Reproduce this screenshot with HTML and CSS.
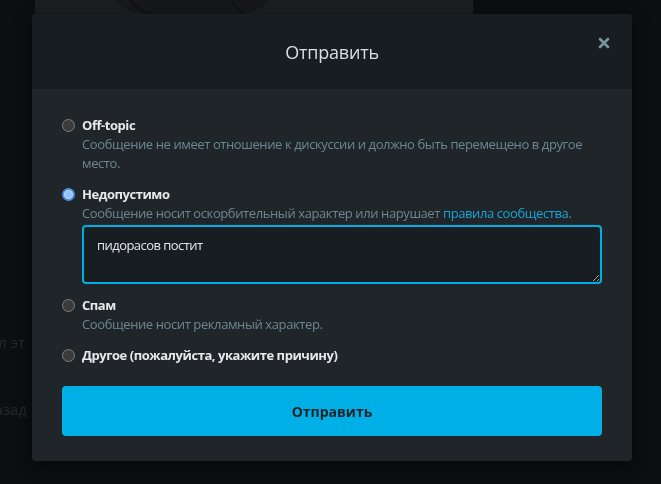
FILE: index.html
```html
<!DOCTYPE html>
<html lang="ru">
<head>
<meta charset="utf-8">
<title>Отправить</title>
<link rel="stylesheet" href="styles.css">
</head>
<body>
<div class="page">
  <div class="hero">
    <svg class="hero-art" width="438" height="14" viewBox="0 0 438 14">
      <path d="M80 0 C90 10 100 14 110 14 L210 14 C220 12 230 6 236 0 Z" fill="#161819"/>
      <path d="M95 0 C100 6 108 12 116 14" stroke="#101213" stroke-width="2" fill="none"/>
      <path d="M196 0 C200 6 206 12 210 14" stroke="#101213" stroke-width="2" fill="none"/>
    </svg>
  </div>
  <div class="bg-text">
    <p class="bg-line one"><span>Прочитал правил эт</span></p>
    <p class="bg-line two"><span>Вернуться назад</span></p>
  </div>
</div>

<div class="overlay">
  <div class="modal">
    <div class="modal-header">
      <h2 class="modal-title">Отправить</h2>
      <button class="close" type="button" aria-label="Закрыть">
        <svg width="12" height="12" viewBox="0 0 12 12"><path d="M2 2 L10 10 M10 2 L2 10" stroke="#7a949d" stroke-width="2.6" stroke-linecap="round"/></svg>
      </button>
    </div>
    <div class="modal-body">
      <div class="options">
        <div class="option">
          <span class="radio"></span>
          <div class="opt-text">
            <div class="opt-label">Off-topic</div>
            <div class="opt-desc">Сообщение не имеет отношение к дискуссии и должно быть перемещено в другое место.</div>
          </div>
        </div>
        <div class="option">
          <span class="radio checked"></span>
          <div class="opt-text">
            <div class="opt-label">Недопустимо</div>
            <div class="opt-desc">Сообщение носит оскорбительный характер или нарушает <a class="link" href="#">правила сообщества</a>.</div>
            <textarea class="reason">пидорасов постит</textarea>
          </div>
        </div>
        <div class="option">
          <span class="radio"></span>
          <div class="opt-text">
            <div class="opt-label">Спам</div>
            <div class="opt-desc">Сообщение носит рекламный характер.</div>
          </div>
        </div>
        <div class="option">
          <span class="radio"></span>
          <div class="opt-text">
            <div class="opt-label">Другое (пожалуйста, укажите причину)</div>
          </div>
        </div>
      </div>
      <button class="submit" type="button">Отправить</button>
    </div>
  </div>
</div>
</body>
</html>
```

FILE: styles.css
```css
* { box-sizing: border-box; }

html, body {
  margin: 0;
  height: 100%;
}

body {
  background: #0b0f10;
  font-family: "Open Sans", "Noto Sans", sans-serif;
  overflow: hidden;
}

.page {
  width: 661px;
  height: 484px;
}

.hero {
  margin-left: 35px;
  width: 438px;
  height: 14px;
  background: #1c1f21;
}

.hero-art {
  display: block;
}

.bg-text {
  padding-top: 318px;
}

.bg-line {
  margin: 0;
  width: 25px;
  display: flex;
  justify-content: flex-end;
  color: #23292b;
  font-size: 15px;
  line-height: 20px;
  white-space: nowrap;
}

.bg-line span {
  flex: none;
}

.bg-line.two {
  margin-top: 47px;
  width: 27px;
}

.overlay {
  position: fixed;
  inset: 0;
  padding: 14px 0 0 32px;
}

.modal {
  position: relative;
  width: 600px;
  border-radius: 4px;
  overflow: hidden;
  background: #1f2528;
  box-shadow: 0 4px 16px rgba(0, 0, 0, 0.5);
}

.modal-header {
  height: 75px;
  background: #171d20;
  display: flex;
  align-items: center;
  justify-content: center;
}

.modal-title {
  margin: 0;
  font-size: 18px;
  font-weight: 400;
  color: #dadfe0;
  letter-spacing: -0.2px;
}

.close {
  position: absolute;
  top: 21px;
  right: 20px;
  width: 16px;
  height: 16px;
  padding: 2px;
  border: 0;
  background: none;
  display: flex;
}

.modal-body {
  padding: 27px 30px 25px 30px;
}

.options {
  display: flex;
  flex-direction: column;
  gap: 12px;
}

.option {
  display: flex;
  align-items: flex-start;
}

.radio {
  flex: none;
  width: 13px;
  height: 13px;
  margin-top: 3px;
  margin-right: 7px;
  border-radius: 50%;
  background: #3b3b3b;
  border: 1px solid #7e7e7e;
}

.radio.checked {
  background: #93c3ff;
  border: 2px solid #4f8fe3;
  box-shadow: inset 0 0 0 1px #c7dfff;
}

.opt-text {
  flex: 1;
  min-width: 0;
}

.opt-label {
  font-size: 13px;
  font-weight: 700;
  line-height: 19px;
  color: #e6e8e9;
  letter-spacing: -0.45px;
}

.opt-desc {
  font-size: 13px;
  line-height: 19px;
  color: #6d8791;
  letter-spacing: -0.4px;
}

.link {
  color: #16a5d8;
  text-decoration: none;
}

.reason {
  display: block;
  width: 100%;
  height: 59px;
  margin-top: 2px;
  padding: 9px 13px;
  border: 2px solid #00aee6;
  border-radius: 4px;
  background: #171d20;
  color: #e3e6e7;
  font-family: inherit;
  font-size: 13px;
  line-height: 19px;
  letter-spacing: -0.55px;
  outline: none;
}

.submit {
  display: block;
  width: 100%;
  height: 50px;
  margin-top: 21px;
  border: 0;
  border-radius: 4px;
  background: #00afe5;
  color: #1a2327;
  font-family: inherit;
  font-size: 14px;
  font-weight: 700;
}
```
